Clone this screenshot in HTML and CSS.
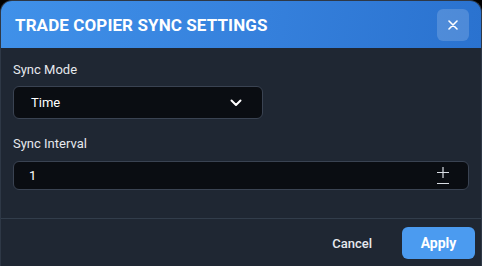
FILE: index.html
```html
<html>
  <head>
    <title>Trade Copier Sync Settings</title>
    <link rel="stylesheet" href="styles.css">
  </head>
  <body>
    <div class="modal">
      <div class="header">
        <div class="title">TRADE COPIER SYNC SETTINGS</div>
        <div class="close">
          <svg width="10" height="10" viewBox="0 0 10 10"><path d="M1 1L9 9M9 1L1 9" stroke="#fff" stroke-width="1.6" stroke-linecap="round"/></svg>
        </div>
      </div>
      <div class="content">
        <div class="label">Sync Mode</div>
        <div class="select">
          <span>Time</span>
          <svg width="12" height="8" viewBox="0 0 12 8"><path d="M1.5 1.5L6 6L10.5 1.5" stroke="#fff" stroke-width="2" fill="none" stroke-linecap="round" stroke-linejoin="round"/></svg>
        </div>
        <div class="label second">Sync Interval</div>
        <div class="input">
          <span>1</span>
          <div class="spin">
            <svg width="12" height="11" viewBox="0 0 12 11"><path d="M6 0V11M0 5.5H12" stroke="#d8dde4" stroke-width="1.2"/></svg>
            <svg width="12" height="3" viewBox="0 0 12 3"><path d="M0 1.5H12" stroke="#d8dde4" stroke-width="1.2"/></svg>
          </div>
        </div>
      </div>
      <div class="footer">
        <div class="cancel">Cancel</div>
        <div class="apply">Apply</div>
      </div>
    </div>
  </body>
</html>
```
FILE: styles.css
```css
body{
  margin:0;
  background:#000;
  font-family:Roboto,"Liberation Sans",sans-serif;
  width:482px;
  height:266px;
  overflow:hidden;
}

.modal{
  box-sizing:border-box;
  width:482px;
  height:266px;
  background:#1f2733;
  border:1px solid #2e3846;
  border-bottom:none;
  border-radius:12px 12px 0 0;
  overflow:hidden;
}

.header{
  display:flex;
  align-items:center;
  justify-content:space-between;
  height:47px;
  padding:0 12px 0 14px;
  background:linear-gradient(100deg,#4091e9 0%,#3580dc 55%,#2a72cf 100%);
}

.title{
  color:#fff;
  font-weight:700;
  font-size:17px;
  letter-spacing:0.1px;
}

.close{
  display:flex;
  align-items:center;
  justify-content:center;
  width:32px;
  height:32px;
  border-radius:6px;
  background:rgba(255,255,255,0.17);
}

.content{
  display:flex;
  flex-direction:column;
  padding:14px 12px 28px 12px;
  border-bottom:1px solid #323d4b;
}

.label{
  color:#e6e9ee;
  font-size:13px;
  line-height:16px;
  margin-bottom:8px;
}

.second{
  margin-top:17px;
  margin-bottom:9px;
}

.select{
  box-sizing:border-box;
  display:flex;
  align-items:center;
  justify-content:space-between;
  width:250px;
  height:33px;
  padding:0 20px 0 17px;
  background:#0a0d12;
  border:1px solid #3a4352;
  border-radius:6px;
  color:#fff;
  font-size:13px;
}

.input{
  box-sizing:border-box;
  display:flex;
  align-items:center;
  justify-content:space-between;
  height:29px;
  padding:0 19px 0 15px;
  background:#0a0d12;
  border:1px solid #3a4352;
  border-radius:6px;
  color:#fff;
  font-size:13px;
}

.spin{
  display:flex;
  flex-direction:column;
  align-items:center;
  gap:4px;
  padding-top:1px;
}

.spin svg{
  display:block;
}

.footer{
  display:flex;
  align-items:center;
  justify-content:flex-end;
  gap:30px;
  padding:8px 6px 0 0;
}

.cancel{
  color:#e6e9ee;
  font-size:13px;
  font-weight:500;
}

.apply{
  display:flex;
  align-items:center;
  justify-content:center;
  width:73px;
  height:32px;
  border-radius:6px;
  background:#4b9bf0;
  color:#fff;
  font-weight:700;
  font-size:14px;
}
```
